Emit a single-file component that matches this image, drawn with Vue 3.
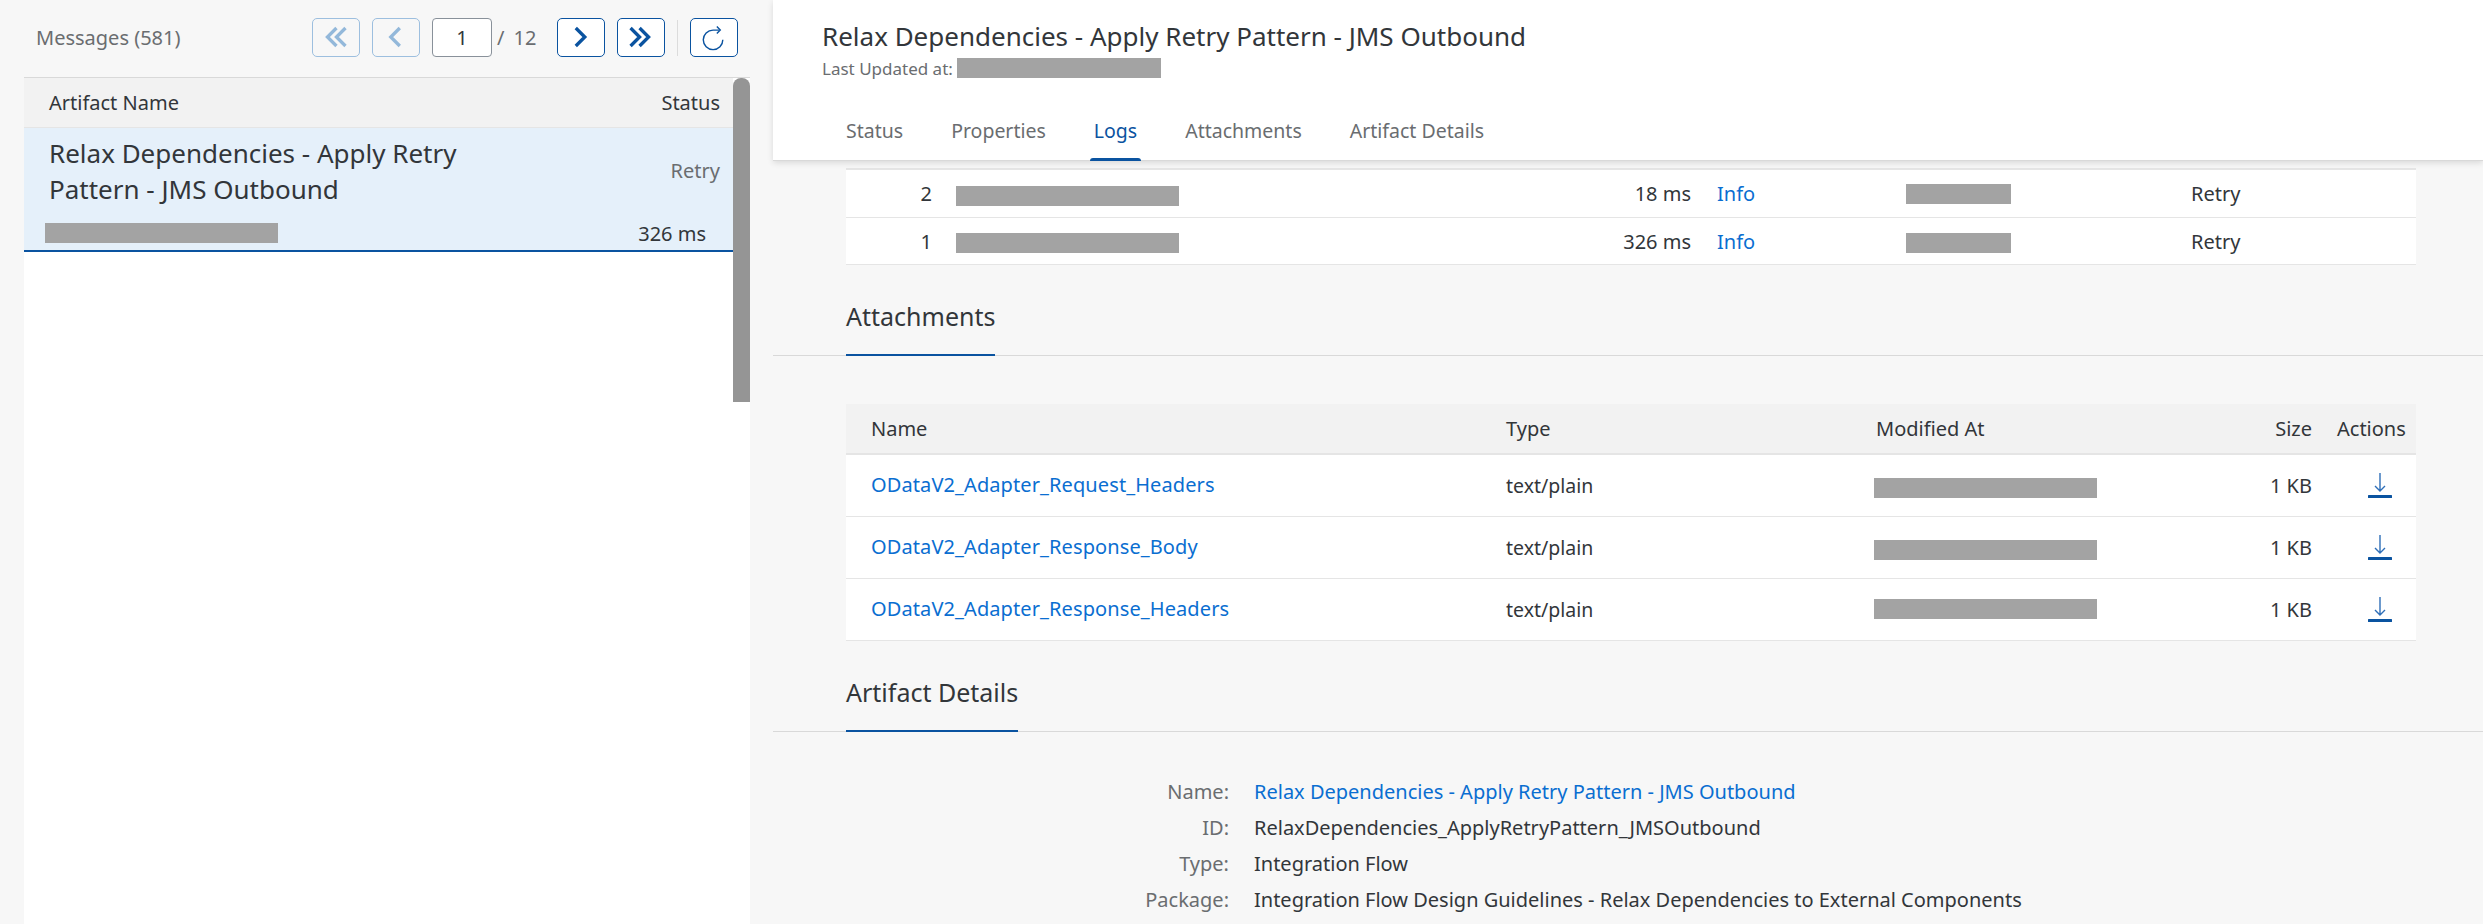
<script setup>
const logs = [
  { n: 2, time: '18 ms', cls: 'bump-log' },
  { n: 1, time: '326 ms', cls: '' },
];
const files = [
  { name: 'ODataV2_Adapter_Request_Headers', cls: '' },
  { name: 'ODataV2_Adapter_Response_Body', cls: '' },
  { name: 'ODataV2_Adapter_Response_Headers', cls: 'bump-file' },
];
const details = [
  { label: 'Name:', value: 'Relax Dependencies - Apply Retry Pattern - JMS Outbound', link: true },
  { label: 'ID:', value: 'RelaxDependencies_ApplyRetryPattern_JMSOutbound' },
  { label: 'Type:', value: 'Integration Flow' },
  { label: 'Package:', value: 'Integration Flow Design Guidelines - Relax Dependencies to External Components' },
];
const tabs = ['Status', 'Properties', 'Logs', 'Attachments', 'Artifact Details'];
</script>

<template>
  <div class="page">
    <aside class="left">
      <div class="toolbar">
        <span class="count">Messages (581)</span>
        <button class="pbtn off">
          <svg viewBox="0 0 48 39"><path d="M24.500 9.500l-9.500 9.500 9.500 9.500M34 9.500l-9.500 9.500 9.500 9.500" /></svg>
        </button>
        <button class="pbtn off">
          <svg viewBox="0 0 48 39"><path d="M28 9.500l-9.500 9.500 9.500 9.500" /></svg>
        </button>
        <div class="pageinput">1</div>
        <span class="pagetotal"><i>/</i>12</span>
        <button class="pbtn">
          <svg viewBox="0 0 48 39"><path d="M18.500 9.500l9.500 9.500-9.500 9.500" /></svg>
        </button>
        <button class="pbtn">
          <svg viewBox="0 0 48 39"><path d="M13 9.500l9.500 9.500-9.500 9.500M22.500 9.500l9.500 9.500-9.500 9.500" /></svg>
        </button>
        <span class="tsep"></span>
        <button class="pbtn thin">
          <svg viewBox="0 0 48 39"><path d="M29 11.700H23A10.300 10.300 0 1 0 33.300 22M27 8l3.600 3.700-3.600 3.700" /></svg>
        </button>
      </div>

      <div class="listwrap">
        <div class="list">
          <div class="listhead">
            <span>Artifact Name</span>
            <span>Status</span>
          </div>
          <div class="selrow">
            <div class="seltop">
              <div class="seltitle">Relax Dependencies - Apply Retry Pattern - JMS Outbound</div>
              <div class="selstatus">Retry</div>
            </div>
            <div class="selbottom">
              <span class="redact r-list"></span>
              <span>326 ms</span>
            </div>
          </div>
        </div>
        <div class="scrollbar"><div class="thumb"></div></div>
      </div>
    </aside>

    <main class="right">
      <header class="head">
        <h1>Relax Dependencies - Apply Retry Pattern - JMS Outbound</h1>
        <div class="updated">Last Updated at:<span class="redact r-updated"></span></div>
        <nav class="tabs">
          <span v-for="t in tabs" :key="t" class="tab" :class="{ active: t === 'Logs' }">{{ t }}</span>
        </nav>
      </header>

      <div class="body">
        <div class="logs">
          <div v-for="l in logs" :key="l.n" class="logrow">
            <span class="lognum">{{ l.n }}</span>
            <span><span class="redact r-log"></span></span>
            <span class="logtime">{{ l.time }}</span>
            <a class="link">Info</a>
            <span><span class="redact r-short" :class="l.cls"></span></span>
            <span>Retry</span>
          </div>
        </div>

        <h2 class="section first"><span>Attachments</span></h2>

        <div class="files">
          <div class="filehead">
            <span class="c-name">Name</span>
            <span>Type</span>
            <span class="c-mod">Modified At</span>
            <span class="c-size">Size</span>
            <span class="c-act">Actions</span>
          </div>
          <div v-for="f in files" :key="f.name" class="filerow">
            <a class="link c-name">{{ f.name }}</a>
            <span class="c-type">text/plain</span>
            <span><span class="redact r-file" :class="f.cls"></span></span>
            <span class="c-size">1 KB</span>
            <span class="c-dl">
              <svg viewBox="0 0 24 26" width="24" height="26">
                <path class="dl-arrow" d="M12 0v17.500M7 13l5 5 5-5" />
                <rect class="dl-bar" x="0" y="22" width="24" height="3" rx="0.500" />
              </svg>
            </span>
          </div>
        </div>

        <h2 class="section second"><span>Artifact Details</span></h2>

        <dl class="details">
          <template v-for="d in details" :key="d.label">
            <dt>{{ d.label }}</dt>
            <dd :class="{ link: d.link }">{{ d.value }}</dd>
          </template>
        </dl>
      </div>
    </main>
  </div>
</template>

<style>
html, body {
  margin: 0;
  height: 924px;
  overflow: hidden;
  background: #f7f7f7;
}
</style>

<style scoped>
.page {
  display: flex;
  width: 2483px;
  height: 924px;
  overflow: hidden;
  font-family: "Noto Sans", "Open Sans", sans-serif;
  font-size: 20px;
  color: #32363a;
  background: #f7f7f7;
}

.left {
  width: 773px;
  flex: none;
  display: flex;
  flex-direction: column;
}

.toolbar {
  height: 77px;
  flex: none;
  box-sizing: border-box;
  padding: 18px 35px 0 36px;
  display: flex;
  align-items: flex-start;
}

.count {
  flex: 1;
  color: #6a6d70;
  line-height: 39px;
}

.pbtn {
  width: 48px;
  height: 39px;
  padding: 0;
  margin-left: 12px;
  box-sizing: border-box;
  background: #fff;
  border: 1px solid #0a53a0;
  border-radius: 5px;
  display: flex;
  align-items: center;
  justify-content: center;
}

.pbtn svg {
  width: 46px;
  height: 37px;
  fill: none;
  stroke: #0a53a0;
  stroke-width: 3.500;
}

.pbtn.thin svg {
  stroke-width: 1.500;
}

.pbtn.off {
  background: #f7f7f7;
  border-color: #9dbfdf;
}

.pbtn.off svg {
  stroke: #93b8da;
}

.pageinput {
  width: 60px;
  height: 39px;
  margin-left: 12px;
  box-sizing: border-box;
  background: #fff;
  border: 1px solid #89919a;
  border-radius: 4px;
  text-align: center;
  line-height: 37px;
}

.pagetotal {
  width: 53px;
  color: #6a6d70;
  line-height: 39px;
  white-space: nowrap;
}

.pagetotal i {
  font-style: normal;
  margin: 0 9px 0 5px;
}

.tsep {
  width: 1px;
  height: 36px;
  margin: 2px 0 0 12px;
  background: #dcdcdc;
}

.listwrap {
  flex: 1;
  display: flex;
  margin: 0 23px 0 24px;
  background: #fff;
  border-top: 1px solid #d9d9d9;
}

.list {
  flex: 1;
  display: flex;
  flex-direction: column;
}

.listhead {
  height: 50px;
  box-sizing: border-box;
  padding: 0 13px 0 25px;
  display: flex;
  justify-content: space-between;
  align-items: center;
  background: #f2f2f2;
  border-bottom: 1px solid #e5e5e5;
}

.selrow {
  height: 124px;
  box-sizing: border-box;
  padding: 0 13px 0 25px;
  background: #e5f0fa;
  border-bottom: 2px solid #0a53a0;
}

.seltop {
  height: 86px;
  display: flex;
  justify-content: space-between;
  align-items: center;
}

.seltitle {
  width: 480px;
  font-size: 26px;
  line-height: 36px;
}

.selstatus {
  color: #6a6d70;
  margin-bottom: 2px;
}

.selbottom {
  display: flex;
  justify-content: space-between;
  align-items: center;
  height: 24px;
  margin: 7px 14px 0 -4px;
}

.scrollbar {
  width: 17px;
  flex: none;
}

.thumb {
  height: 324px;
  background: #959595;
  border-radius: 8px 8px 0 0;
}

.redact {
  display: inline-block;
  height: 20px;
  background: #a3a3a3;
  vertical-align: middle;
}

.r-list { width: 233px; }
.r-updated { width: 204px; margin-left: 4px; }
.r-log { width: 223px; }
.r-short { width: 105px; }
.r-file { width: 223px; }
.bump-log { margin-top: -4px; }
.bump-file { margin-top: -5px; }

.right {
  flex: 1;
  display: flex;
  flex-direction: column;
  min-width: 0;
}

.head {
  height: 161px;
  flex: none;
  box-sizing: border-box;
  padding: 18px 0 0 49px;
  background: #fff;
  border-bottom: 1px solid #d9d9d9;
  box-shadow: 0 2px 6px rgba(0, 0, 0, 0.12);
  position: relative;
}

h1 {
  margin: 0;
  font-size: 26px;
  font-weight: 400;
  line-height: 36px;
}

.updated {
  display: flex;
  align-items: center;
  height: 24px;
  margin-top: 2px;
  font-size: 17px;
  color: #6a6d70;
}

.tabs {
  display: flex;
  gap: 48px;
  padding-left: 24px;
  margin-top: 18px;
}

.tab {
  position: relative;
  height: 63px;
  line-height: 65px;
  font-size: 19.500px;
  color: #6a6d70;
}

.tab.active {
  color: #0a53a0;
}

.tab.active::after {
  content: "";
  position: absolute;
  left: -4px;
  right: -4px;
  bottom: 0;
  height: 3px;
  background: #0a53a0;
  border-radius: 3px 3px 0 0;
}

.body {
  flex: 1;
  padding-top: 7px;
}

.logs {
  margin: 0 67px 0 73px;
  background: #fff;
  border-top: 2px solid #e5e5e5;
}

.logrow {
  display: grid;
  grid-template-columns: 110px 223px 512px 215px 285px 1fr;
  height: 47px;
  box-sizing: border-box;
  align-items: center;
  border-bottom: 1px solid #e5e5e5;
}

.logrow:first-child {
  height: 48px;
}

.lognum {
  padding-right: 24px;
  text-align: right;
}

.logtime {
  text-align: right;
}

.logrow .link {
  padding-left: 26px;
}

.link {
  color: #0a6ed1;
}

.section {
  margin: 0;
  font-size: 25px;
  font-weight: 400;
  padding-left: 73px;
  border-bottom: 1px solid #d9d9d9;
}

.section span {
  display: inline-block;
  height: 61px;
  line-height: 46px;
  border-bottom: 2px solid #0a53a0;
  margin-bottom: -1px;
  vertical-align: bottom;
}

.section.first,
.section.second {
  margin-top: 28px;
}

.files {
  margin: 48px 67px 0 73px;
  background: #fff;
}

.filehead,
.filerow {
  display: grid;
  grid-template-columns: 660px 368px 326px 112px 1fr;
  align-items: center;
  box-sizing: border-box;
}

.filehead {
  height: 51px;
  background: #f2f2f2;
  border-bottom: 2px solid #e5e5e5;
}

.filerow {
  height: 62px;
  border-bottom: 1px solid #e5e5e5;
}

.filerow .link {
  margin-top: -3px;
  letter-spacing: 0.100px;
}

.c-name {
  padding-left: 25px;
}

.c-type {
  font-size: 19.500px;
}

.c-mod {
  padding-left: 2px;
}

.c-size {
  text-align: right;
}

.c-act {
  padding-left: 25px;
  white-space: nowrap;
}

.c-dl {
  padding-left: 56px;
  display: flex;
}

.dl-arrow {
  fill: none;
  stroke: #2f6fb8;
  stroke-width: 1.400;
}

.dl-bar {
  fill: #0a53a0;
}

.details {
  display: grid;
  grid-template-columns: 456px 1fr;
  column-gap: 25px;
  margin: 42px 0 0 0;
}

.details dt {
  text-align: right;
  color: #6a6d70;
  line-height: 36px;
}

.details dd {
  margin: 0;
  line-height: 36px;
  white-space: nowrap;
}
</style>
